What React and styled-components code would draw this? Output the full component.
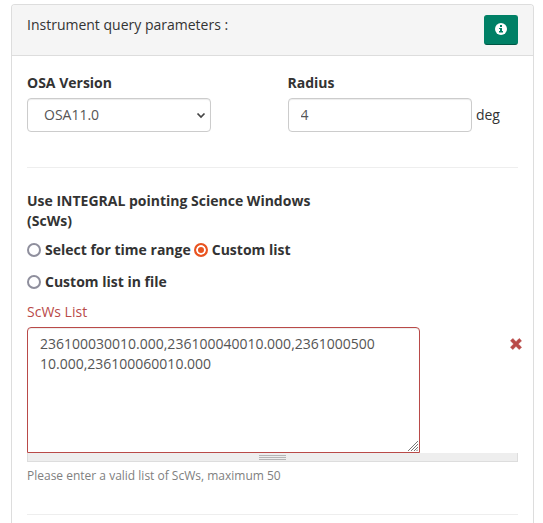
import React, { useState } from "react";
import styled, { createGlobalStyle } from "styled-components";

const GlobalStyle = createGlobalStyle`
  *, *::before, *::after { box-sizing: border-box; }
  body {
    margin: 0;
    background: #fff;
    color: #333;
    font-family: "Open Sans", "Noto Sans", sans-serif;
    font-size: 14px;
    line-height: 20px;
  }
`;

const Panel = styled.section`
  margin: 4px 9px 0 11px;
  border: 1px solid #ddd;
  border-bottom: 0;
  border-radius: 4px 4px 0 0;
`;

const PanelHeader = styled.header`
  display: flex;
  justify-content: space-between;
  align-items: flex-start;
  padding: 10px 15px;
  background: #f5f5f5;
  border-bottom: 1px solid #ddd;
  border-radius: 3px 3px 0 0;
`;

const PanelTitle = styled.h2`
  margin: 0;
  font-size: 14px;
  line-height: 20px;
  font-weight: 400;
`;

const InfoButton = styled.button`
  display: flex;
  align-items: center;
  justify-content: center;
  width: 34px;
  height: 30px;
  padding: 0 0 2px;
  border: 1px solid #008066;
  border-bottom-color: #005544;
  border-radius: 3px;
  background: #008066;
  color: #fff;
  cursor: pointer;
`;

const PanelBody = styled.form`
  padding: 17px 15px 8px;
`;

const Row = styled.div`
  display: grid;
  grid-template-columns: 1fr 1fr;
  column-gap: 30px;
`;

const Field = styled.div`
  min-width: 0;
`;

const Label = styled.label`
  display: block;
  margin-bottom: 5px;
  font-weight: ${(p) => (p.$error ? 500 : 700)};
  color: ${(p) => (p.$error ? "#b94a48" : "#333")};
`;

const InputGroup = styled.div`
  display: flex;
  align-items: center;
  gap: 4px;
`;

const controlStyle = `
  display: block;
  margin: 0;
  border: 1px solid #ccc;
  border-radius: 4px;
  background-color: #fff;
  box-shadow: inset 0 1px 1px rgba(0, 0, 0, 0.075);
  color: #555;
  font: inherit;
`;

const TextInput = styled.input`
  ${controlStyle}
  width: 80%;
  height: 34px;
  padding: 5px 12px 7px;
`;

const SelectWrap = styled.div`
  position: relative;
  width: 80%;
`;

const Select = styled.select`
  ${controlStyle}
  appearance: none;
  width: 100%;
  height: 34px;
  padding: 6px 24px 6px 16px;
`;

const SelectArrow = styled.svg`
  position: absolute;
  right: 5px;
  top: 14px;
  pointer-events: none;
`;

const Divider = styled.hr`
  height: 1px;
  margin: ${(p) => (p.$last ? "28px 0 0" : "35px 0 23px")};
  border: 0;
  background: #eee;
`;

const ChoiceGroup = styled.fieldset`
  width: 60%;
  min-width: 0;
  margin: 0 0 10px;
  padding: 0;
  border: 0;
`;

const Legend = styled.legend`
  padding: 0;
  font-weight: 700;
  color: #333;
`;

const ChoiceList = styled.div`
  display: flex;
  flex-wrap: wrap;
  gap: 12px 3px;
  padding-top: 9px;
`;

const Choice = styled.label`
  display: flex;
  align-items: center;
  gap: 4px;
  font-weight: 700;
  color: #333;
`;

const Radio = styled.input`
  appearance: none;
  width: 14px;
  height: 14px;
  margin: 0;
  border: 2px solid #8f8f9d;
  border-radius: 50%;
  background: #fff;

  &:checked {
    border-color: #e95420;
    background: #e95420;
    box-shadow: inset 0 0 0 2px #fff;
  }
`;

const ResizableArea = styled.div`
  position: relative;
`;

const TextAreaFrame = styled.div`
  position: relative;
`;

const TextArea = styled.textarea`
  ${controlStyle}
  width: 80%;
  height: 126px;
  padding: 6px 42px 6px 12px;
  border-color: #b94a48;
  border-bottom-left-radius: 0;
  border-bottom-right-radius: 0;
  resize: none;
  word-break: break-all;
`;

const Corner = styled.svg`
  position: absolute;
  right: calc(20% + 2px);
  bottom: 2px;
  pointer-events: none;
`;

const ErrorMark = styled.svg`
  position: absolute;
  right: -4px;
  top: 11px;
`;

const Grip = styled.div`
  display: flex;
  justify-content: center;
  align-items: center;
  height: 9px;
  border: 1px solid #ddd;
  border-top: 0;
  background: #eee;
  cursor: s-resize;
`;

const HelpText = styled.p`
  margin: 4px 0 0;
  font-size: 12px;
  line-height: 20px;
  color: #808080;
`;

const modes = ["Select for time range", "Custom list", "Custom list in file"];

export default function App() {
  const [mode, setMode] = useState("Custom list");

  return (
    <>
      <GlobalStyle />
      <Panel>
        <PanelHeader>
          <PanelTitle>Instrument query parameters :</PanelTitle>
          <InfoButton type="button" aria-label="Help">
            <svg width="12" height="12" viewBox="0 0 12 12" aria-hidden="true">
              <circle cx="6" cy="6" r="6" fill="currentColor" />
              <path d="M5 2h2v2H5zM4 5h3v3h1v1.5H4V8h1V6H4z" fill="#008066" />
            </svg>
          </InfoButton>
        </PanelHeader>
        <PanelBody>
          <Row>
            <Field>
              <Label htmlFor="osa-version">OSA Version</Label>
              <SelectWrap>
                <Select id="osa-version" defaultValue="OSA11.0">
                  <option>OSA11.0</option>
                </Select>
                <SelectArrow width="10" height="7" viewBox="0 0 10 7" aria-hidden="true">
                  <path d="M1.5 1.5 5 5l3.5-3.5" fill="none" stroke="#444" strokeWidth="1.7" />
                </SelectArrow>
              </SelectWrap>
            </Field>
            <Field>
              <Label htmlFor="radius">Radius</Label>
              <InputGroup>
                <TextInput id="radius" type="text" defaultValue="4" />
                <span>deg</span>
              </InputGroup>
            </Field>
          </Row>
          <Divider />
          <ChoiceGroup>
            <Legend>Use INTEGRAL pointing Science Windows (ScWs)</Legend>
            <ChoiceList>
              {modes.map((name) => (
                <Choice key={name}>
                  <Radio
                    type="radio"
                    name="mode"
                    checked={mode === name}
                    onChange={() => setMode(name)}
                  />
                  {name}
                </Choice>
              ))}
            </ChoiceList>
          </ChoiceGroup>
          <Label $error htmlFor="scws">ScWs List</Label>
          <ResizableArea>
            <TextAreaFrame>
              <TextArea
                id="scws"
                aria-invalid="true"
                aria-describedby="scws-help"
                spellCheck={false}
                defaultValue="236100030010.000,236100040010.000,236100050010.000,236100060010.000"
              />
              <Corner width="10" height="10" viewBox="0 0 10 10" aria-hidden="true">
                <path d="M0 10 10 0M3 10l7-7M6 10l4-4M8.5 10l1.5-1.5" stroke="#777" fill="none" />
              </Corner>
            </TextAreaFrame>
            <ErrorMark width="12" height="12" viewBox="0 0 12 12" role="img" aria-label="Invalid">
              <path d="M2.8.5 6 3.7 9.2.5l2.3 2.3L8.3 6l3.2 3.2-2.3 2.3L6 8.3l-3.2 3.2L.5 9.2 3.7 6 .5 2.8z" fill="#b94a48" stroke="#b94a48" strokeWidth=".6" strokeLinejoin="round" />
            </ErrorMark>
            <Grip>
              <svg width="27" height="5" viewBox="0 0 27 5" aria-hidden="true">
                <path d="M0 .5h27M0 2.5h27M0 4.5h27" stroke="#b5b5b5" />
              </svg>
            </Grip>
          </ResizableArea>
          <HelpText id="scws-help">Please enter a valid list of ScWs, maximum 50</HelpText>
          <Divider $last />
        </PanelBody>
      </Panel>
    </>
  );
}
